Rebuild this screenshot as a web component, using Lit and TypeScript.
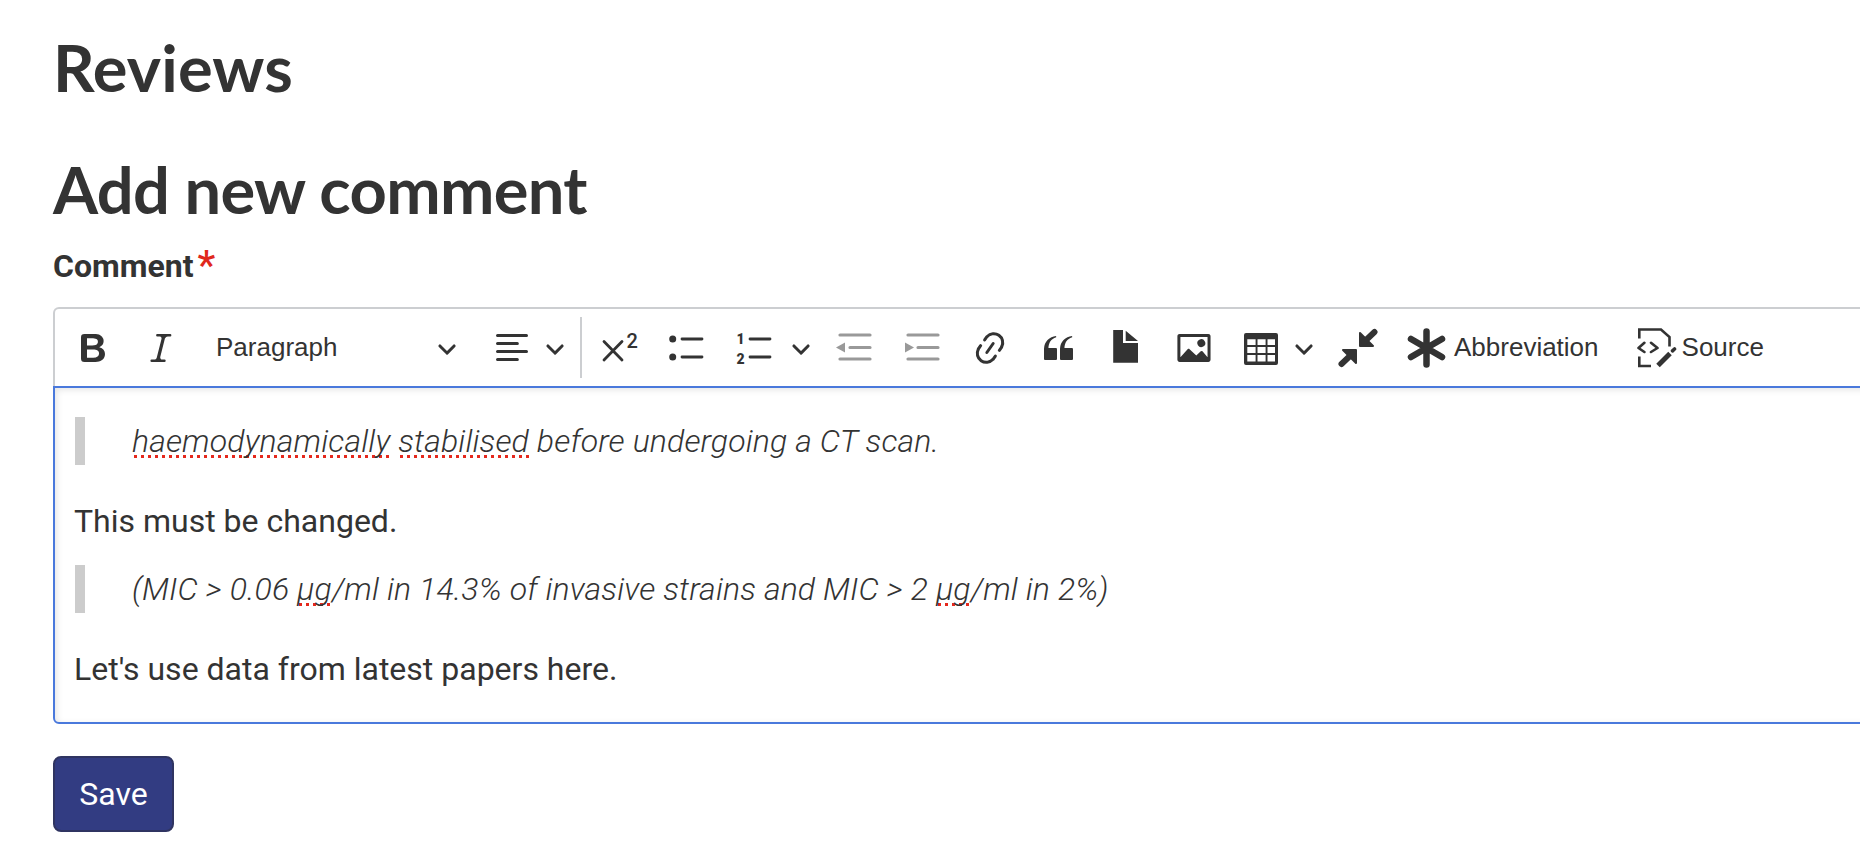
import { LitElement, html, css } from "lit";
import { customElement } from "lit/decorators.js";

const chevron = html`<svg class="chev" width="20" height="20" viewBox="0 0 10 10"><path fill="#333" d="M.941 4.523a.75.75 0 1 1 1.06-1.06l3.006 3.005 3.005-3.005a.75.75 0 1 1 1.06 1.06l-3.549 3.55a.75.75 0 0 1-1.168-.136L.941 4.523z"/></svg>`;

const icon20 = (d: string) => html`<svg class="ico" width="40" height="40" viewBox="0 0 20 20"><path fill="#333" d=${d}/></svg>`;

const bold = icon20("M10.187 17H5.773c-.637 0-1.092-.138-1.364-.415-.273-.277-.409-.718-.409-1.323V4.738c0-.617.14-1.062.419-1.332.279-.27.73-.406 1.354-.406h4.68c.69 0 1.288.041 1.793.124.506.083.96.242 1.36.478.341.197.644.447.906.75a3.262 3.262 0 0 1 .808 2.162c0 1.401-.722 2.426-2.167 3.075C15.05 10.175 16 11.315 16 13.01a3.756 3.756 0 0 1-2.296 3.504 6.1 6.1 0 0 1-1.517.377c-.571.073-1.238.11-2 .11zm-.217-6.217H7v4.087h3.069c1.977 0 2.965-.69 2.965-2.072 0-.707-.256-1.22-.768-1.537-.512-.319-1.277-.478-2.296-.478zM7 5.13v3.619h2.606c.729 0 1.292-.067 1.69-.2a1.6 1.6 0 0 0 .91-.765c.165-.267.247-.566.247-.897 0-.707-.26-1.176-.778-1.409-.519-.232-1.31-.348-2.375-.348H7z");
const italic = icon20("m9.586 14.633.021.004c-.036.335.095.655.393.962.082.083.173.15.274.201h1.474a.6.6 0 1 1 0 1.2H5.304a.6.6 0 0 1 0-1.2h1.15c.474-.07.809-.182 1.005-.334.157-.122.291-.32.404-.597l2.416-9.55a1.053 1.053 0 0 0-.281-.823 1.12 1.12 0 0 0-.442-.296H8.15a.6.6 0 0 1 0-1.2h6.443a.6.6 0 1 1 0 1.2h-1.195c-.376.056-.65.155-.823.296-.215.175-.423.439-.623.79l-2.366 9.347z");
const align = icon20("M2 3.750c0 .414.336.75.75.75h14.5a.75.75 0 1 0 0-1.5H2.750a.75.75 0 0 0-.75.75zm0 8c0 .414.336.75.75.75h14.5a.75.75 0 1 0 0-1.5H2.750a.75.75 0 0 0-.75.75zm0 4c0 .414.336.75.75.75h9.929a.75.75 0 1 0 0-1.5H2.750a.75.75 0 0 0-.75.75zm0-8c0 .414.336.75.75.75h9.929a.75.75 0 1 0 0-1.5H2.750a.75.75 0 0 0-.75.75z");
const link = icon20("m11.077 15 .991-1.416a.75.75 0 1 1 1.229.86l-1.148 1.64a.748.748 0 0 1-.217.206 5.251 5.251 0 0 1-8.503-5.955.741.741 0 0 1 .12-.274l1.147-1.639a.75.75 0 1 1 1.228.86L4.933 10.700l.006.003a3.750 3.750 0 0 0 6.132 4.294l.006.004zm5.494-5.335a.748.748 0 0 1-.12.274l-1.147 1.639a.75.75 0 1 1-1.228-.86l.86-1.230a3.750 3.750 0 0 0-6.144-4.301l-.86 1.229a.75.75 0 0 1-1.229-.86l1.148-1.640a.748.748 0 0 1 .217-.206 5.251 5.251 0 0 1 8.503 5.955zm-4.563-2.532a.75.75 0 0 1 .184 1.045l-3.155 4.505a.75.75 0 1 1-1.229-.86l3.155-4.506a.75.75 0 0 1 1.045-.184z");
const quote = icon20("M3 10.423a6.500 6.500 0 0 1 6.056-6.408l.038.67C6.448 5.423 5.354 7.663 5.220 10H9c.552 0 .5.432.5.986v4.511c0 .554-.448.503-1 .503h-5c-.552 0-.5-.449-.5-1.003v-4.574zm8 0a6.500 6.500 0 0 1 6.056-6.408l.038.67c-2.646.739-3.740 2.979-3.873 5.315H17c.552 0 .5.432.5.986v4.511c0 .554-.448.503-1 .503h-5c-.552 0-.5-.449-.5-1.003v-4.574z");
const image = icon20("M6.910 10.540c.26-.23.64-.21.88.03l3.360 3.140 2.230-2.060a.64.64 0 0 1 .87 0l2.520 2.970V4.500H3.200v10.120l3.710-4.080zm10.270-7.510c.6 0 1.090.47 1.090 1.050v11.840c0 .59-.49 1.060-1.090 1.060H2.790c-.6 0-1.090-.47-1.090-1.060V4.080c0-.58.49-1.050 1.100-1.050h14.380zm-5.220 5.560a1.960 1.960 0 1 1 3.400-1.960 1.960 1.960 0 0 1-3.400 1.960z");

const table = html`<svg class="ico" width="40" height="40" viewBox="0 0 40 40"><path fill="#333" fill-rule="evenodd" d="M4 5H34A2 2 0 0 1 36 7V35A2 2 0 0 1 34 37H4A2 2 0 0 1 2 35V7A2 2 0 0 1 4 5Z M5.300 11.300V17H13.600V11.300Z M15.500 11.300V17H23.600V11.300Z M25.500 11.300V17H33V11.300Z M5.300 19V25H13.600V19Z M15.500 19V25H23.600V19Z M25.500 19V25H33V19Z M5.300 27V33.500H13.600V27Z M15.500 27V33.500H23.600V27Z M25.500 27V33.500H33V27Z"/></svg>`;

const superscript = html`<svg class="ico" width="40" height="40" viewBox="0 0 40 40"><path fill="none" stroke="#333" stroke-width="2.800" stroke-linecap="round" d="M4 13.500 L22 32 M22 13.500 L4 32"/><text class="gt gm" x="26.500" y="20" font-size="20">2</text></svg>`;

const bullets = html`<svg class="ico" width="40" height="40" viewBox="0 0 40 40"><circle cx="4.700" cy="11" r="3.500" fill="#333"/><circle cx="4.700" cy="29" r="3.500" fill="#333"/><path stroke="#333" stroke-width="2.800" stroke-linecap="round" d="M14 11H34M14 29H34"/></svg>`;

const numbers = html`<svg class="ico" width="40" height="40" viewBox="0 0 40 40"><text class="gt gb" x="4.500" y="15.500" font-size="14" text-anchor="middle">1</text><text class="gt gb" x="4.500" y="35.500" font-size="14" text-anchor="middle">2</text><path stroke="#333" stroke-width="2.800" stroke-linecap="round" d="M14 11H34M14 29H34"/></svg>`;

const outdent = html`<svg class="ico" width="40" height="40" viewBox="0 0 40 40"><path stroke="#999" stroke-width="3.200" stroke-linecap="round" d="M6 7H36M16 19.500H36M6 31H36"/><path fill="#999" d="M2 19.500 L11 14.500 V24.500 Z"/></svg>`;

const indent = html`<svg class="ico" width="40" height="40" viewBox="0 0 40 40"><path stroke="#999" stroke-width="3.200" stroke-linecap="round" d="M6 7H36M16 19.500H36M6 31H36"/><path fill="#999" d="M12 19.500 L3 14.500 V24.500 Z"/></svg>`;

const file = html`<svg class="ico" width="40" height="40" viewBox="0 0 40 40"><path fill="#333" d="M7.200 2H17V15H32V34.700H7.200Z M19.700 2.700 L32 13 H19.700Z"/></svg>`;

const collapse = html`<svg class="ico" width="40" height="40" viewBox="0 0 40 40"><path fill="#333" stroke="#333" stroke-width="2" stroke-linejoin="round" d="M22 5 V18 H35 Z M5 22 H18 V35 Z"/><path stroke="#333" stroke-width="6" stroke-linecap="round" d="M26 14 L36.500 4 M14 26 L3.500 36"/></svg>`;

const asterisk = html`<svg class="ico" width="40" height="40" viewBox="0 0 40 40"><path stroke="#333" stroke-width="6.500" stroke-linecap="round" d="M20.500 3.500 V36.500 M5 11 L36 29 M5 29 L36 11"/></svg>`;

const source = html`<svg class="ico" width="40" height="40" viewBox="0 0 40 40"><path fill="none" stroke="#333" stroke-width="2.600" d="M2.300 10.500 V1.500 H24 L32.500 9 V18.500 M2.300 28.500 V38 H14"/><path fill="none" stroke="#333" stroke-width="2.600" stroke-linecap="round" stroke-linejoin="round" d="M7.400 14.800 L1.500 20 L7.400 24 M14 14.800 L20.500 20 L14 24"/><path stroke="#333" stroke-width="5" d="M21 37.500 L33 25.500"/><path stroke="#333" stroke-width="3.600" stroke-linecap="round" d="M35.500 22.800 L37.500 21"/></svg>`;

@customElement("app-root")
export class AppRoot extends LitElement {
  static styles = css`
    :host { display: block; width: 1860px; height: 868px; overflow: hidden; background: #fff; color: #333; font-family: Roboto, "Liberation Sans", sans-serif; }
    .page { padding-left: 53px; display: flex; flex-direction: column; }
    h2 { margin: 0; font-family: Lato, sans-serif; font-weight: 700; color: #333; font-size: 65px; line-height: 72px; }
    .h-reviews { margin-top: 31px; letter-spacing: 0.15px; }
    .h-add { margin-top: 50px; letter-spacing: -0.65px; }
    .label { font-weight: 700; font-size: 32px; line-height: 36px; margin-top: 23px; display: flex; }
    .req { color: #e0281c; font-size: 40px; margin-left: 4px; line-height: 36px; font-weight: 500; }
    .editor { margin-top: 23px; width: 1900px; }
    .toolbar { box-sizing: border-box; height: 79px; padding-left: 4px; border: 2px solid #ccced1; border-bottom: 0; border-radius: 6px 0 0 0; display: flex; align-items: center; font: 400 26px "Liberation Sans", Arial, sans-serif; color: #333; }
    .btn { flex: none; display: flex; align-items: center; height: 40px; }
    .icon-btn { width: 68px; justify-content: center; }
    .ico, .chev { display: block; flex: none; }
    .gt { font-family: Roboto, sans-serif; fill: #333; }
    .gm { font-weight: 500; }
    .gb { font-weight: 900; }
    .heading { width: 274px; box-sizing: border-box; padding: 0 12px 0 21px; justify-content: space-between; }
    .align { width: 110px; box-sizing: border-box; padding-left: 23px; gap: 13px; }
    .sep { flex: none; width: 2px; height: 61px; margin: 0 4px 0 1px; background: #ccced1; }
    .numbered { width: 98px; box-sizing: border-box; padding-left: 14px; gap: 15px; }
    .tables { width: 96px; box-sizing: border-box; padding-left: 14px; gap: 12px; }
    .abbr { padding-left: 14px; gap: 8px; }
    .src { margin-left: 38px; gap: 5px; }
    .content { box-sizing: border-box; height: 338px; border: 2px solid #4a79dc; border-radius: 0 0 0 6px; padding: 29px 0 0 20px; box-shadow: inset 2px 2px 6px rgba(0,0,0,.1); font-size: 32px; line-height: 48px; color: #333; }
    blockquote { margin: 0; border-left: 10px solid #ccc; padding-left: 47px; height: 48px; font-style: italic; font-weight: 300; letter-spacing: 0.13px; }
    p { margin: 32px 0 0 -1px; }
    .q2 { margin-top: 20px; }
    .sp { background-image: radial-gradient(circle, #e5281c 1.6px, transparent 2px); background-size: 7px 7px; background-repeat: repeat-x; background-position: 0 100%; }
    .save { align-self: flex-start; margin-top: 32px; width: 121px; height: 76px; box-sizing: border-box; background: #323c82; border: 2px solid #2f3461; border-radius: 8px; color: #fff; font: 400 32px Roboto, sans-serif; padding: 0; }
  `;
  render() {
    return html`<div class="page">
      <h2 class="h-reviews">Reviews</h2>
      <h2 class="h-add">Add new comment</h2>
      <div class="label"><span>Comment</span><span class="req">*</span></div>
      <div class="editor">
        <div class="toolbar">
          <span class="btn icon-btn">${bold}</span>
          <span class="btn icon-btn">${italic}</span>
          <span class="btn heading"><span>Paragraph</span>${chevron}</span>
          <span class="btn align">${align}${chevron}</span>
          <span class="sep"></span>
          <span class="btn icon-btn">${superscript}</span>
          <span class="btn icon-btn">${bullets}</span>
          <span class="btn numbered">${numbers}${chevron}</span>
          <span class="btn icon-btn">${outdent}</span>
          <span class="btn icon-btn">${indent}</span>
          <span class="btn icon-btn">${link}</span>
          <span class="btn icon-btn">${quote}</span>
          <span class="btn icon-btn">${file}</span>
          <span class="btn icon-btn">${image}</span>
          <span class="btn tables">${table}${chevron}</span>
          <span class="btn icon-btn">${collapse}</span>
          <span class="btn abbr">${asterisk}<span>Abbreviation</span></span>
          <span class="btn src">${source}<span>Source</span></span>
        </div>
        <div class="content">
          <blockquote><span class="sp">haemodynamically</span> <span class="sp">stabilised</span> before undergoing a CT scan.</blockquote>
          <p>This must be changed.</p>
          <blockquote class="q2">(MIC &gt; 0.06 <span class="sp">µg</span>/ml in 14.3% of invasive strains and MIC &gt; 2 <span class="sp">µg</span>/ml in 2%)</blockquote>
          <p>Let's use data from latest papers here.</p>
        </div>
      </div>
      <button class="save">Save</button>
    </div>`;
  }
}
